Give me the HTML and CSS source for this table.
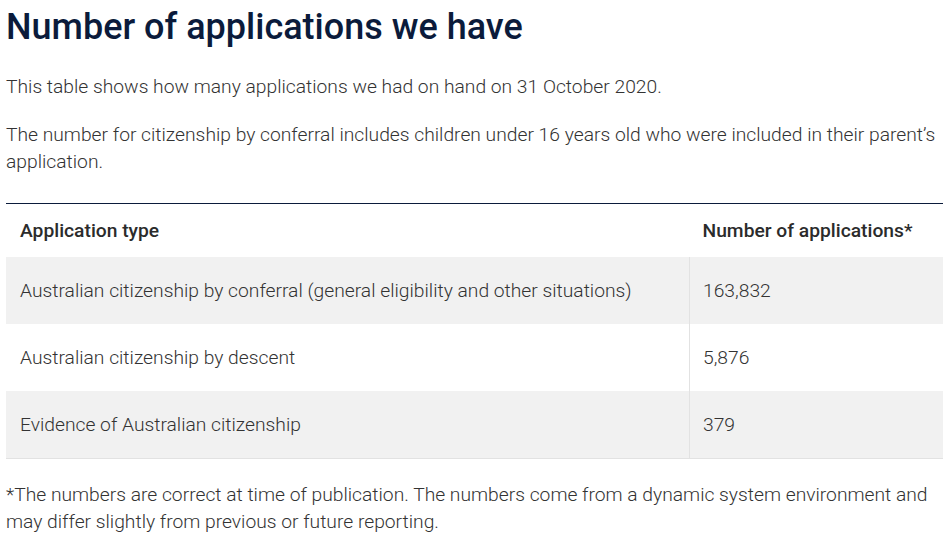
FILE: index.html
```html
<!DOCTYPE html>
<html lang="en">
<head>
<meta charset="utf-8">
<title>Number of applications we have</title>
<link rel="stylesheet" href="styles.css">
</head>
<body>
<main class="page">
  <h1 class="title">Number of applications we have</h1>
  <p class="intro">This table shows how many applications we had on hand on 31 October 2020.</p>
  <p class="intro second">The number for citizenship by conferral includes children under 16 years old who were included in their parent’s application.</p>
  <table class="data">
    <thead>
      <tr>
        <th class="col-type">Application type</th>
        <th class="col-num">Number of applications*</th>
      </tr>
    </thead>
    <tbody>
      <tr class="shade">
        <td class="col-type">Australian citizenship by conferral (general eligibility and other situations)</td>
        <td class="col-num">163,832</td>
      </tr>
      <tr>
        <td class="col-type">Australian citizenship by descent</td>
        <td class="col-num">5,876</td>
      </tr>
      <tr class="shade">
        <td class="col-type">Evidence of Australian citizenship</td>
        <td class="col-num">379</td>
      </tr>
    </tbody>
  </table>
  <p class="note">*The numbers are correct at time of publication. The numbers come from a dynamic system environment and may differ slightly from previous or future reporting.</p>
</main>
</body>
</html>
```
FILE: styles.css
```css
html, body {
  margin: 0;
  padding: 0;
  background: #ffffff;
}
body {
  font-family: Roboto, "Liberation Sans", sans-serif;
  color: #333333;
}
.page {
  padding: 6px 6px 0 6px;
}
.title {
  margin: 0;
  font-size: 36px;
  line-height: 43px;
  font-weight: 500;
  color: #0b1b3b;
}
.intro, .note {
  font-size: 19.25px;
  line-height: 27px;
  font-weight: 300;
  margin: 0;
}
.intro {
  margin-top: 24px;
}
.intro.second {
  margin-top: 21px;
}
.data {
  width: 100%;
  margin-top: 28px;
  border-collapse: collapse;
  border-top: 1px solid #0b1b3b;
  border-bottom: 1px solid #e2e2e2;
  font-size: 19.25px;
  line-height: 27px;
}
.data th {
  text-align: left;
  font-weight: 500;
  color: #2b2b2b;
  padding: 13px 14px 13px 14px;
}
.data td {
  font-weight: 300;
  padding: 20px 14px;
}
.data .col-type {
  width: 655px;
}
.data td.col-num {
  border-left: 1px solid #e2e2e2;
  padding-left: 13px;
}
.data th.col-num {
  padding-left: 13px;
}
.shade {
  background: #f1f1f1;
}
.note {
  margin-top: 22px;
}
```
